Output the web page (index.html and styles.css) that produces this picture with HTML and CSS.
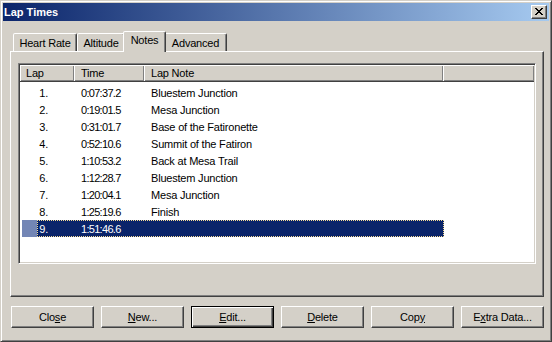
FILE: index.html
```html
<!DOCTYPE html>
<html>
<head>
<meta charset="utf-8">
<link rel="stylesheet" href="styles.css">
</head>
<body>
<div class="window">
  <div class="titlebar">
    <span class="title">Lap Times</span>
    <span class="close-btn">
      <svg width="8" height="7" viewBox="0 0 8 7" shape-rendering="crispEdges"><path fill="#000" d="M0 0h2v1h-2z M6 0h2v1h-2z M1 1h2v1h-2z M5 1h2v1h-2z M2 2h4v1h-4z M3 3h2v1h-2z M2 4h4v1h-4z M1 5h2v1h-2z M5 5h2v1h-2z M0 6h2v1h-2z M6 6h2v1h-2z"/></svg>
    </span>
  </div>
  <div class="tabs">
    <div class="tab t1">Heart Rate</div>
    <div class="tab t2">Altitude</div>
    <div class="tab t3 selected">Notes</div>
    <div class="tab t4">Advanced</div>
  </div>
  <div class="panel">
    <div class="list">
      <div class="header">
        <div class="hc c1">Lap</div>
        <div class="hc c2">Time</div>
        <div class="hc c3">Lap Note</div>
        <div class="hc c4"></div>
      </div>
      <div class="rows">
        <div class="row"><span class="num">1.</span><span class="time">0:07:37.2</span><span class="note">Bluestem Junction</span></div>
        <div class="row"><span class="num">2.</span><span class="time">0:19:01.5</span><span class="note">Mesa Junction</span></div>
        <div class="row"><span class="num">3.</span><span class="time">0:31:01.7</span><span class="note">Base of the Fatironette</span></div>
        <div class="row"><span class="num">4.</span><span class="time">0:52:10.6</span><span class="note">Summit of the Fatiron</span></div>
        <div class="row"><span class="num">5.</span><span class="time">1:10:53.2</span><span class="note">Back at Mesa Trail</span></div>
        <div class="row"><span class="num">6.</span><span class="time">1:12:28.7</span><span class="note">Bluestem Junction</span></div>
        <div class="row"><span class="num">7.</span><span class="time">1:20:04.1</span><span class="note">Mesa Junction</span></div>
        <div class="row"><span class="num">8.</span><span class="time">1:25:19.6</span><span class="note">Finish</span></div>
        <div class="row sel"><span class="num">9.</span><span class="time">1:51:46.6</span><span class="note"></span></div>
      </div>
    </div>
  </div>
  <div class="buttons">
    <div class="btn">Clo<u>s</u>e</div>
    <div class="btn"><u>N</u>ew...</div>
    <div class="btn default"><u>E</u>dit...</div>
    <div class="btn"><u>D</u>elete</div>
    <div class="btn">Cop<u>y</u></div>
    <div class="btn">E<u>x</u>tra Data...</div>
  </div>
</div>
</body>
</html>
```
FILE: styles.css
```css
html, body {
  margin: 0;
  padding: 0;
}
body {
  width: 552px;
  height: 342px;
  overflow: hidden;
  background: #D4D0C8;
  font-family: "Liberation Sans", Arial, sans-serif;
  font-size: 11px;
  letter-spacing: -0.2px;
  color: #000;
}
.window {
  box-sizing: border-box;
  width: 552px;
  height: 342px;
  border: 1px solid;
  border-color: #D4D0C8 #404040 #404040 #D4D0C8;
  box-shadow: inset 1px 1px #fff, inset -1px -1px #808080;
  padding: 2px;
  display: flex;
  flex-direction: column;
}
.titlebar {
  height: 18px;
  flex: none;
  background: linear-gradient(to right, #0A246A, #A6CAF0);
  display: flex;
  align-items: center;
  justify-content: space-between;
  padding: 0 2px 0 1px;
}
.title {
  color: #fff;
  font-weight: bold;
  letter-spacing: 0;
}
.close-btn {
  box-sizing: border-box;
  width: 16px;
  height: 14px;
  background: #D4D0C8;
  border: 1px solid;
  border-color: #fff #404040 #404040 #fff;
  box-shadow: inset -1px -1px #808080;
  display: flex;
  align-items: center;
  justify-content: center;
  padding: 0 1px 1px 0;
}
.close-btn svg {
  display: block;
}
.tabs {
  display: flex;
  align-items: flex-end;
  margin: 10px 0 0 10px;
  flex: none;
}
.tab {
  box-sizing: border-box;
  height: 18px;
  border: 1px solid;
  border-bottom: none;
  border-color: #fff #404040 transparent #fff;
  box-shadow: inset -1px 0 #808080;
  border-radius: 2px 2px 0 0;
  background: #D4D0C8;
  display: flex;
  align-items: center;
  justify-content: center;
  padding-top: 1px;
}
.t1 { width: 64px; }
.t2 { width: 48px; }
.t3 { width: 43px; margin: 0 -2px -1px; }
.t4 { width: 63px; }
.tab.selected {
  height: 21px;
  position: relative;
  z-index: 1;
  padding: 0 0 4px;
}
.panel {
  box-sizing: border-box;
  width: 534px;
  height: 246px;
  margin-left: 7px;
  flex: none;
  border: 1px solid;
  border-color: #fff #404040 #404040 #fff;
  box-shadow: inset -1px -1px #808080;
  padding: 11px 0 0 7px;
}
.list {
  box-sizing: border-box;
  width: 518px;
  height: 201px;
  background: #fff;
  border: 1px solid;
  border-color: #808080 #fff #fff #808080;
  box-shadow: inset 1px 1px #404040, inset -1px -1px #D4D0C8;
  padding: 1px;
}
.header {
  display: flex;
  height: 17px;
}
.hc {
  box-sizing: border-box;
  height: 17px;
  line-height: 16px;
  background: #D4D0C8;
  border-bottom: 1px solid #404040;
  box-shadow: inset 1px 1px #fff, inset -1px -1px #808080;
  padding-left: 7px;
  white-space: nowrap;
}
.c1 { width: 54px; padding-left: 6px; }
.c2 { width: 70px; }
.c3 { width: 299px; }
.c4 { flex: 1; }
.rows {
  padding-top: 2px;
}
.row {
  position: relative;
  display: flex;
  align-items: center;
  width: 424px;
  height: 17px;
  white-space: nowrap;
}
.num {
  width: 28px;
  text-align: right;
}
.time {
  box-sizing: border-box;
  width: 103px;
  padding-left: 33px;
  letter-spacing: -0.7px;
}
.row.sel {
  color: #fff;
  background: linear-gradient(to right, transparent 2px, #7386B5 2px, #7386B5 17px, #0A246A 17px);
}
.row.sel::after {
  content: "";
  position: absolute;
  left: 17px;
  top: 0;
  right: 0;
  bottom: 0;
  border: 1px dotted #F5DB95;
}
.buttons {
  display: flex;
  justify-content: space-between;
  width: 533px;
  margin: 9px 0 0 8px;
  flex: none;
}
.btn {
  box-sizing: border-box;
  width: 83px;
  height: 22px;
  background: #D4D0C8;
  border: 1px solid;
  border-color: #fff #404040 #404040 #fff;
  box-shadow: inset -1px -1px #808080;
  display: flex;
  align-items: center;
  justify-content: center;
  padding-bottom: 1px;
}
.btn.default {
  border-color: #000;
  box-shadow: inset 1px 1px #fff, inset -1px -1px #404040, inset -2px -2px #808080;
}
```
